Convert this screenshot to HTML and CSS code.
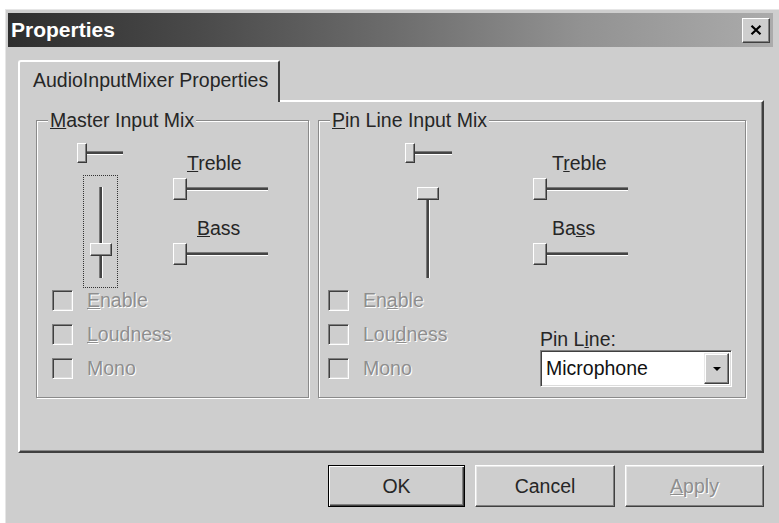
FILE: index.html
```html
<!DOCTYPE html>
<html>
<head>
<meta charset="utf-8">
<title>Properties</title>
<link rel="stylesheet" href="styles.css">
</head>
<body>
<div class="window">
  <div class="titlebar">
    <span class="title">Properties</span>
    <button class="close" aria-label="Close">
      <svg width="12" height="10" viewBox="0 0 12 10"><path d="M1.5 0.8 L10.5 9.2 M10.5 0.8 L1.5 9.2" stroke="#000" stroke-width="2.2" fill="none"/></svg>
    </button>
  </div>
  <div class="tabs"><div class="tab">AudioInputMixer Properties</div></div>
  <div class="panel">
    <div class="groups">
      <div class="group master">
        <span class="legend"><u>M</u>aster Input Mix</span>
        <div class="top">
          <div class="col-a">
            <div class="hslider small"><div class="track"></div><div class="thumb"></div></div>
            <div class="vslider focus"><div class="vtrack"></div><div class="vthumb low"></div></div>
          </div>
          <div class="col-b">
            <div class="lbl t"><u>T</u>reble</div>
            <div class="hslider wide"><div class="track"></div><div class="thumb"></div></div>
            <div class="lbl b"><u>B</u>ass</div>
            <div class="hslider wide"><div class="track"></div><div class="thumb"></div></div>
          </div>
        </div>
        <div class="bottom">
          <div class="checks">
            <div class="check"><span class="box"></span><span class="ctext"><u>E</u>nable</span></div>
            <div class="check"><span class="box"></span><span class="ctext"><u>L</u>oudness</span></div>
            <div class="check"><span class="box"></span><span class="ctext">Mono</span></div>
          </div>
        </div>
      </div>
      <div class="group pin">
        <span class="legend"><u>P</u>in Line Input Mix</span>
        <div class="top">
          <div class="col-a">
            <div class="hslider small"><div class="track"></div><div class="thumb"></div></div>
            <div class="vslider"><div class="vtrack"></div><div class="vthumb high"></div></div>
          </div>
          <div class="col-b">
            <div class="lbl t">T<u>r</u>eble</div>
            <div class="hslider wide"><div class="track"></div><div class="thumb"></div></div>
            <div class="lbl b">Ba<u>s</u>s</div>
            <div class="hslider wide"><div class="track"></div><div class="thumb"></div></div>
          </div>
        </div>
        <div class="bottom">
          <div class="checks">
            <div class="check"><span class="box"></span><span class="ctext">En<u>a</u>ble</span></div>
            <div class="check"><span class="box"></span><span class="ctext">Lou<u>d</u>ness</span></div>
            <div class="check"><span class="box"></span><span class="ctext">Mono</span></div>
          </div>
          <div class="pinline">
            <div class="plabel">Pin L<u>i</u>ne:</div>
            <div class="combo">
              <span class="ctxt">Microphone</span>
              <span class="drop"><span class="arrow"></span></span>
            </div>
          </div>
        </div>
      </div>
    </div>
  </div>
  <div class="buttons">
    <button class="btn ok">OK</button>
    <button class="btn cancel">Cancel</button>
    <button class="btn apply"><u>A</u>pply</button>
  </div>
</div>
</body>
</html>
```
FILE: styles.css
```css
* { box-sizing: border-box; }
body {
  margin: 0;
  background: #fff;
  font-family: "Liberation Sans", Arial, sans-serif;
  font-size: 19.5px;
  color: #262626;
  overflow: hidden;
}
.window {
  margin: 9px 0 0 5px;
  width: 774px;
  height: 514px;
  background: #cecece;
  border-top: 1px solid #e6e6e6;
  border-left: 1px solid #e6e6e6;
  padding: 3px 0 0 2px;
  display: flex;
  flex-direction: column;
}
.titlebar {
  height: 34px;
  margin-right: 6px;
  background: linear-gradient(90deg, #2e2e2e 0%, #4a4a4a 25%, #6c6c6c 50%, #929292 75%, #ababab 100%);
  display: flex;
  align-items: center;
  justify-content: space-between;
  padding-left: 3px;
}
.title {
  color: #fff;
  font-weight: bold;
  font-size: 21px;
}
.close {
  width: 28px;
  height: 25px;
  margin-right: 3px;
  padding: 0 1px 1px 0;
  background: #cecece;
  border: 1px solid;
  border-color: #fff #404040 #404040 #fff;
  box-shadow: inset -1px -1px #808080;
  display: flex;
  align-items: center;
  justify-content: center;
}
.tabs {
  margin: 13px 0 0 10px;
  display: flex;
  position: relative;
  z-index: 1;
}
.tab {
  width: 262px;
  height: 42px;
  margin-bottom: -2px;
  padding: 0 0 4px 13px;
  background: #cecece;
  border-top: 2px solid #fff;
  border-left: 2px solid #fff;
  border-right: 2px solid #404040;
  border-top-left-radius: 3px;
  border-top-right-radius: 2px;
  display: flex;
  align-items: center;
  white-space: nowrap;
}
.panel {
  margin-left: 10px;
  width: 746px;
  height: 353px;
  border: 2px solid;
  border-color: #fff #404040 #404040 #fff;
  box-shadow: inset -1px -1px #8a8a8a;
  padding: 18px 0 0 16px;
}
.groups {
  display: flex;
  gap: 9px;
}
.group {
  position: relative;
  height: 278px;
  border: 1px solid #8a8a8a;
  box-shadow: inset 1px 1px #fff, 1px 1px #fff;
}
.master { width: 273px; }
.pin { width: 428px; }
.legend {
  position: absolute;
  left: 11px;
  top: -12px;
  padding: 0 2px;
  background: #cecece;
  line-height: 22px;
}
.top {
  display: flex;
  height: 167px;
}
.col-a {
  padding-top: 22px;
  display: flex;
  flex-direction: column;
}
.master .col-a { margin-left: 40px; width: 46px; }
.pin .col-a { margin-left: 86px; width: 47px; }
.col-b {
  padding-top: 31px;
  display: flex;
  flex-direction: column;
}
.master .col-b { margin-left: 50px; }
.pin .col-b { margin-left: 81px; }
.lbl {
  height: 22px;
  line-height: 22px;
}
.master .lbl.t { padding-left: 14px; }
.master .lbl.b { padding-left: 24px; }
.pin .lbl { padding-left: 19px; }
.col-b .hslider { margin-top: 4px; }
.col-b .lbl.b { margin-top: 17px; }

.hslider {
  position: relative;
  display: flex;
  align-items: center;
}
.hslider.small { width: 100%; height: 20px; }
.hslider.wide { width: 95px; height: 22px; }
.track {
  width: 100%;
  height: 4px;
  margin-top: -1px;
  background: #444;
  border-top: 1px solid #777;
  border-bottom: 1px solid #fff;
}
.thumb {
  position: absolute;
  left: 0;
  top: 0;
  height: 100%;
  background: #d6d6d6;
  border: 1px solid;
  border-color: #fff #3a3a3a #3a3a3a #fff;
  box-shadow: inset -1px -1px #808080;
}
.small .thumb { width: 10px; }
.wide .thumb { width: 14px; }

.vslider {
  position: relative;
  margin-top: 12px;
  width: 35px;
  height: 113px;
  display: flex;
  justify-content: center;
  padding-top: 12px;
}
.master .vslider { margin-left: 6px; }
.pin .vslider { margin-left: 5px; }
.vslider.focus { border: 1px dotted #333; padding-top: 11px; }
.vtrack {
  width: 4px;
  height: 91px;
  background: #444;
  border-left: 1px solid #777;
  border-right: 1px solid #fff;
}
.vthumb {
  position: absolute;
  left: 6px;
  width: 22px;
  height: 13px;
  background: #d6d6d6;
  border: 1px solid;
  border-color: #fff #3a3a3a #3a3a3a #fff;
  box-shadow: inset -1px -1px #808080;
}
.vthumb.low { top: 67px; }
.vthumb.high { top: 12px; left: 7px; }

.bottom { display: flex; }
.pin .bottom {
  display: grid;
  grid-template-columns: 212px auto;
  padding-left: 9px;
}
.master .bottom { padding-left: 15px; }
.checks {
  display: flex;
  flex-direction: column;
  gap: 10px;
}
.check {
  display: flex;
  align-items: center;
  height: 24px;
  gap: 14px;
}
.box {
  width: 21px;
  height: 21px;
  background: #cecece;
  border: 1px solid;
  border-color: #808080 #fff #fff #808080;
  box-shadow: inset 1px 1px #404040, inset -1px -1px #dcdcdc;
}
.ctext {
  color: #8e8e8e;
  text-shadow: 1px 1px 0 #fff;
}
.pinline {
  padding-top: 41px;
  display: flex;
  flex-direction: column;
}
.plabel {
  height: 21px;
  line-height: 21px;
}
.combo {
  width: 192px;
  height: 37px;
  background: #fff;
  border: 1px solid;
  border-color: #808080 #fff #fff #808080;
  box-shadow: inset 1px 1px #404040, inset -1px -1px #dcdcdc;
  padding: 2px 2px 2px 5px;
  display: flex;
  align-items: center;
  justify-content: space-between;
}
.ctxt { color: #111; }
.drop {
  width: 25px;
  height: 31px;
  background: #cecece;
  border: 1px solid;
  border-color: #e8e8e8 #404040 #404040 #e8e8e8;
  box-shadow: inset -1px -1px #808080, inset 1px 1px #fff;
  display: flex;
  align-items: center;
  justify-content: center;
}
.arrow {
  width: 0;
  height: 0;
  border-left: 4px solid transparent;
  border-right: 4px solid transparent;
  border-top: 4px solid #000;
}
.buttons {
  margin: 12px 0 0 10px;
  width: 746px;
  display: flex;
  justify-content: flex-end;
  gap: 10px;
}
.btn {
  height: 42px;
  font: inherit;
  color: #262626;
  background: #cecece;
  border: 1px solid;
  border-color: #fff #404040 #404040 #fff;
  box-shadow: inset -1px -1px #808080, inset 1px 1px #e6e6e6;
  padding: 0;
}
.ok {
  width: 137px;
  border: 1px solid #000;
  box-shadow: inset 1px 1px #fff, inset -1px -1px #404040, inset -2px -2px #808080;
}
.cancel { width: 140px; }
.apply {
  width: 139px;
  color: #8e8e8e;
  text-shadow: 1px 1px 0 #fff;
}
```
